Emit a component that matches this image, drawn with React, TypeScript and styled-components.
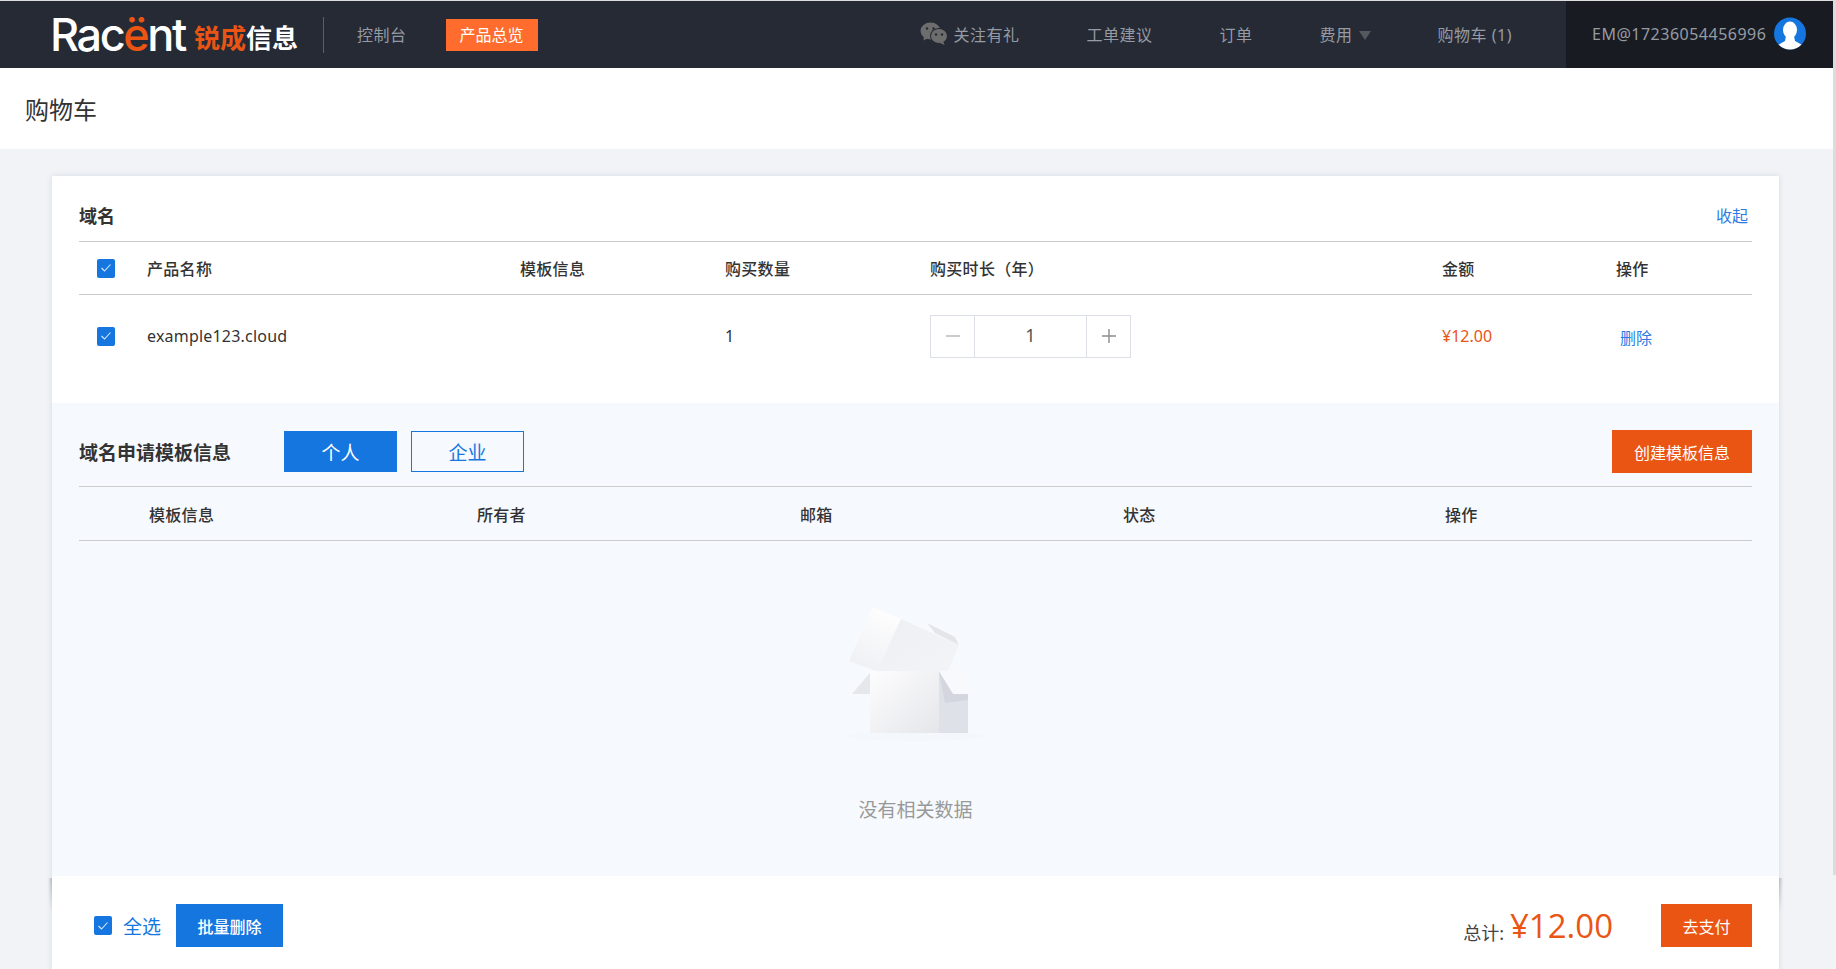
import React from "react";
import styled, { createGlobalStyle } from "styled-components";

const GlobalStyle = createGlobalStyle`
  html {
    overflow: hidden;
  }
  body {
    margin: 0;
    background: #f1f3f7;
    color: #333;
    font-family: "Noto Sans", "Noto Sans CJK SC", sans-serif;
    font-size: 16px;
  }
`;

const Frame = styled.div`
  display: flex;
  height: 100vh;
  overflow: hidden;
`;

const Page = styled.div`
  flex: 1;
  min-width: 0;
`;

const ScrollTrack = styled.div`
  width: 3px;
  background: #f1f3f7;
`;

const ScrollThumb = styled.div`
  height: 875px;
  background: #dcdcdc;
`;

const Header = styled.header`
  height: 67px;
  display: flex;
  align-items: stretch;
  background: #252a35;
  border-top: 1px solid #dedede;
`;

const Logo = styled.div`
  display: flex;
  align-items: flex-end;
  width: 248px;
  height: 50px;
  margin-left: 50px;
  white-space: nowrap;
  line-height: 1;
`;

const LogoWord = styled.span`
  font-family: "Inter", sans-serif;
  font-weight: 500;
  font-size: 45px;
  letter-spacing: -2.4px;
  color: #fff;
  line-height: 45px;
  margin-bottom: -6px;
`;

const LogoAccent = styled.span`
  color: #ea5514;
`;

const LogoCn = styled.span<{ $accent?: boolean }>`
  font-family: "Noto Sans CJK SC", sans-serif;
  font-weight: 700;
  font-size: 26px;
  line-height: 26px;
  margin-bottom: 1px;
  color: ${(p) => (p.$accent ? "#ea5514" : "#fff")};
`;

const LogoGap = styled.span`
  flex: 1;
`;

const HeaderDivider = styled.div`
  width: 1px;
  height: 36px;
  margin: 16px 33px 0 25px;
  background: #5a5f69;
`;

const NavLink = styled.a`
  display: flex;
  align-items: center;
  gap: 6px;
  padding-bottom: 2px;
  color: #969ba3;
  white-space: nowrap;
  letter-spacing: 0.5px;
`;

const ActiveLink = styled.a`
  width: 92px;
  height: 32px;
  margin: 18px 0 0 39px;
  padding-bottom: 2px;
  box-sizing: border-box;
  display: flex;
  align-items: center;
  justify-content: center;
  background: #ff6c2d;
  color: #fff;
`;

const RightNav = styled.nav`
  margin-left: auto;
  display: flex;
  gap: 67px;
  margin-right: 54px;
`;

const Caret = styled.i`
  width: 0;
  height: 0;
  margin-top: 3px;
  border-left: 6px solid transparent;
  border-right: 6px solid transparent;
  border-top: 9px solid #55585e;
`;

const UserBox = styled.div`
  width: 267px;
  display: flex;
  align-items: center;
  gap: 8px;
  padding: 0 0 2px 26px;
  box-sizing: border-box;
  background: #181b22;
  color: #969ba3;
  letter-spacing: 0.5px;
`;

const TitleBar = styled.div`
  height: 81px;
  display: flex;
  align-items: center;
  padding-left: 25px;
  background: #fff;
  font-size: 24px;
  color: #333;
`;

const Main = styled.main`
  padding: 27px 54px 0 52px;
`;

const Card = styled.div`
  box-shadow: 0 0 6px rgba(60, 70, 100, 0.14);
`;

const Section = styled.section<{ $tint?: boolean }>`
  padding: 0 27px;
  background: ${(p) => (p.$tint ? "#f6f9fd" : "#fff")};
`;

const DomainSection = styled(Section)`
  height: 227px;
`;

const TemplateSection = styled(Section)`
  height: 473px;
`;

const SectionHead = styled.div`
  height: 66px;
  padding-top: 12px;
  display: flex;
  align-items: center;
  justify-content: space-between;
  border-bottom: 1px solid #ccc;
  box-sizing: border-box;
`;

const SectionTitle = styled.h2<{ $size: number }>`
  margin: 0;
  font-size: ${(p) => p.$size}px;
  font-weight: 700;
  color: #333;
`;

const Collapse = styled.a`
  margin-right: 4px;
  color: #2f7be0;
`;

const cartColumns = "68px 373px 205px 205px 512px 174px 136px";
const templateColumns = "70px 328px 323px 323px 322px 307px";

const TableRow = styled.div<{ $columns: string; $height: number; $head?: boolean }>`
  display: grid;
  grid-template-columns: ${(p) => p.$columns};
  align-items: center;
  height: ${(p) => p.$height}px;
  box-sizing: border-box;
  border-bottom: ${(p) => (p.$head ? "1px solid #ccc" : "none")};
  font-weight: ${(p) => (p.$head ? 500 : 400)};
  letter-spacing: ${(p) => (p.$head ? "0.3px" : "0")};
  color: #333;
`;

const DomainName = styled.div`
  letter-spacing: 0.2px;
`;

const CheckCell = styled.div`
  padding-left: 18px;
  display: flex;
`;

const Check = styled.span`
  width: 18px;
  height: 19px;
  border-radius: 2px;
  background: #1576e0;
  display: flex;
  align-items: center;
  justify-content: center;
`;

const Stepper = styled.div`
  width: 201px;
  height: 43px;
  display: flex;
  box-sizing: border-box;
  border: 1px solid #dcdfe8;
`;

const StepButton = styled.button`
  width: 43px;
  padding: 0;
  border: 0;
  background: #fff;
  display: flex;
  align-items: center;
  justify-content: center;
`;

const StepValue = styled.div`
  flex: 1;
  display: flex;
  align-items: center;
  justify-content: center;
  padding-bottom: 3px;
  border-left: 1px solid #dcdfe8;
  border-right: 1px solid #dcdfe8;
  font-size: 18px;
  color: #555;
`;

const Amount = styled.span`
  color: #ea5514;
`;

const DeleteLink = styled.a`
  padding: 2px 0 0 4px;
  color: #2f7be0;
`;

const Toolbar = styled.div`
  height: 84px;
  padding-top: 14px;
  display: flex;
  align-items: center;
  border-bottom: 1px solid #ccc;
  box-sizing: border-box;
`;

const TypeTabs = styled.div`
  margin-left: 53px;
  display: flex;
  gap: 14px;
`;

const TypeTab = styled.button<{ $active?: boolean }>`
  width: 113px;
  height: 41px;
  padding: 0;
  border: 1px solid #1576e0;
  background: ${(p) => (p.$active ? "#1576e0" : "transparent")};
  color: ${(p) => (p.$active ? "#fff" : "#1576e0")};
  font: inherit;
  font-size: 19px;
`;

const ActionButton = styled.button<{ $tone: "blue" | "orange"; $width: number }>`
  width: ${(p) => p.$width}px;
  height: 43px;
  padding: 0;
  border: 0;
  background: ${(p) => (p.$tone === "blue" ? "#1576e0" : "#ea5514")};
  color: #fff;
  font: inherit;
  font-weight: ${(p) => (p.$tone === "blue" ? 500 : 400)};
`;

const CreateButton = styled(ActionButton)`
  margin-left: auto;
`;

const Empty = styled.div`
  display: flex;
  flex-direction: column;
  align-items: center;
  padding-top: 49px;
`;

const EmptyArt = styled.div`
  margin-right: 11px;
  height: 160px;
`;

const EmptyText = styled.div`
  margin-top: 47px;
  font-size: 19px;
  line-height: 26px;
  color: #999;
`;

const Footer = styled.footer`
  position: relative;
  height: 99px;
  padding: 0 27px 0 42px;
  display: flex;
  align-items: center;
  background: #fff;
  &::before,
  &::after {
    content: "";
    position: absolute;
    top: 2px;
    width: 4px;
    height: 34px;
    mask-image: linear-gradient(#000, transparent);
  }
  &::before {
    left: -4px;
    background: linear-gradient(to left, rgba(90, 95, 110, 0.35), transparent);
  }
  &::after {
    right: -4px;
    background: linear-gradient(to right, rgba(90, 95, 110, 0.35), transparent);
  }
`;

const SelectAll = styled.label`
  display: flex;
  align-items: center;
  gap: 11px;
  margin-right: 15px;
  color: #1576e0;
  font-size: 19px;
`;

const Total = styled.div`
  margin-left: auto;
  margin-right: 48px;
  display: flex;
  align-items: flex-end;
  gap: 6px;
  font-size: 18px;
  line-height: 26px;
  color: #444;
`;

const TotalPrice = styled.span`
  font-family: "Open Sans", "Noto Sans", sans-serif;
  font-size: 33px;
  line-height: 40px;
  color: #ea5514;
`;

const CheckMark = () => (
  <Check>
    <svg width="12" height="10" viewBox="0 0 12 10" fill="none">
      <path d="M1.5 5 L4.5 8 L10.5 1.5" stroke="#d8e8fb" strokeWidth="1.1" />
    </svg>
  </Check>
);

const WechatIcon = () => (
  <svg width="28" height="23" viewBox="0 0 28 23">
    <ellipse cx="10.5" cy="9" rx="10" ry="8.5" fill="#6d6d6d" />
    <path d="M4 14 L3.5 18.5 L9 15.5 Z" fill="#6d6d6d" />
    <ellipse cx="19" cy="14" rx="9" ry="8" fill="#252a35" />
    <ellipse cx="19" cy="14" rx="8" ry="7" fill="#6d6d6d" />
    <path d="M23 19 L24.5 23 L19 20.5 Z" fill="#6d6d6d" />
    <circle cx="7" cy="6.5" r="1.2" fill="#252a35" />
    <circle cx="13.5" cy="6.5" r="1.2" fill="#252a35" />
    <circle cx="16" cy="12.5" r="1.2" fill="#252a35" />
    <circle cx="22" cy="12.5" r="1.2" fill="#252a35" />
  </svg>
);

const Avatar = () => (
  <svg width="32" height="33" viewBox="0 0 32 33">
    <defs>
      <clipPath id="avatar-clip">
        <circle cx="16" cy="16.5" r="16" />
      </clipPath>
    </defs>
    <circle cx="16" cy="16.5" r="16" fill="#1576e0" />
    <g clipPath="url(#avatar-clip)" fill="#fff">
      <ellipse cx="16" cy="13" rx="7" ry="8.5" />
      <path d="M12 19 L20 19 L21 24 L30 29 L30 34 L2 34 L2 29 L11 24 Z" />
    </g>
  </svg>
);

const EmptyBox = () => (
  <svg width="180" height="160" viewBox="0 0 180 160">
    <defs>
      <linearGradient id="box-front" x1="0" y1="0" x2="1" y2="1">
        <stop offset="0" stopColor="#fdfdfe" />
        <stop offset="1" stopColor="#e5e6ea" />
      </linearGradient>
      <linearGradient id="box-flap" x1="0.7" y1="0" x2="0.3" y2="1">
        <stop offset="0" stopColor="#fefefe" />
        <stop offset="1" stopColor="#eff0f4" />
      </linearGradient>
      <linearGradient id="box-top" x1="0" y1="0" x2="1" y2="1">
        <stop offset="0" stopColor="#eeeff3" />
        <stop offset="1" stopColor="#f3f4f7" />
      </linearGradient>
    </defs>
    <ellipse cx="95" cy="146" rx="68" ry="5" fill="#f4f7fb" />
    <polygon points="53,17 81,29 57,81 29,71" fill="url(#box-flap)" />
    <polygon points="81,29 139,55 128,81 57,81" fill="url(#box-top)" />
    <polygon points="107,33 135,47 139,55 115,43" fill="#e4e5e9" />
    <polygon points="50,83 32,104 50,104" fill="#e6e7ea" />
    <rect x="50" y="81" width="69" height="62" fill="url(#box-front)" />
    <rect x="119" y="81" width="29" height="62" fill="#dfe1e8" />
    <polygon points="119,81 148,81 148,104 133,104" fill="#f8f9fc" />
    <polygon points="119,82 133,104 148,104 148,110 125,113" fill="#d3d6df" />
  </svg>
);

const App: React.FunctionComponent<{}> = () => {
  return (
    <Frame>
      <GlobalStyle />
      <Page>
        <Header>
          <Logo>
            <LogoWord>
              Rac<LogoAccent>ë</LogoAccent>nt
            </LogoWord>
            <LogoGap />
            <LogoCn $accent>锐成</LogoCn>
            <LogoCn>信息</LogoCn>
          </Logo>
          <HeaderDivider />
          <NavLink>控制台</NavLink>
          <ActiveLink>产品总览</ActiveLink>
          <RightNav>
            <NavLink>
              <WechatIcon />
              关注有礼
            </NavLink>
            <NavLink>工单建议</NavLink>
            <NavLink>订单</NavLink>
            <NavLink>
              费用
              <Caret />
            </NavLink>
            <NavLink>购物车 (1)</NavLink>
          </RightNav>
          <UserBox>
            EM@17236054456996
            <Avatar />
          </UserBox>
        </Header>
        <TitleBar>购物车</TitleBar>
        <Main>
          <Card>
            <DomainSection>
              <SectionHead>
                <SectionTitle $size={18}>域名</SectionTitle>
                <Collapse>收起</Collapse>
              </SectionHead>
              <TableRow $columns={cartColumns} $height={53} $head>
                <CheckCell>
                  <CheckMark />
                </CheckCell>
                <div>产品名称</div>
                <div>模板信息</div>
                <div>购买数量</div>
                <div>购买时长（年）</div>
                <div>金额</div>
                <div>操作</div>
              </TableRow>
              <TableRow $columns={cartColumns} $height={82}>
                <CheckCell>
                  <CheckMark />
                </CheckCell>
                <DomainName>example123.cloud</DomainName>
                <div />
                <div>1</div>
                <Stepper>
                  <StepButton aria-label="减少">
                    <svg width="14" height="14" viewBox="0 0 14 14">
                      <path d="M0 7 H14" stroke="#b5b5b5" strokeWidth="1.4" />
                    </svg>
                  </StepButton>
                  <StepValue>1</StepValue>
                  <StepButton aria-label="增加">
                    <svg width="14" height="14" viewBox="0 0 14 14">
                      <path d="M0 7 H14 M7 0 V14" stroke="#8c8c8c" strokeWidth="1.4" />
                    </svg>
                  </StepButton>
                </Stepper>
                <Amount>¥12.00</Amount>
                <DeleteLink>删除</DeleteLink>
              </TableRow>
            </DomainSection>
            <TemplateSection $tint>
              <Toolbar>
                <SectionTitle $size={19}>域名申请模板信息</SectionTitle>
                <TypeTabs>
                  <TypeTab $active>个人</TypeTab>
                  <TypeTab>企业</TypeTab>
                </TypeTabs>
                <CreateButton $tone="orange" $width={140}>
                  创建模板信息
                </CreateButton>
              </Toolbar>
              <TableRow $columns={templateColumns} $height={54} $head>
                <div />
                <div>模板信息</div>
                <div>所有者</div>
                <div>邮箱</div>
                <div>状态</div>
                <div>操作</div>
              </TableRow>
              <Empty>
                <EmptyArt>
                  <EmptyBox />
                </EmptyArt>
                <EmptyText>没有相关数据</EmptyText>
              </Empty>
            </TemplateSection>
            <Footer>
              <SelectAll>
                <CheckMark />
                全选
              </SelectAll>
              <ActionButton $tone="blue" $width={107}>
                批量删除
              </ActionButton>
              <Total>
                总计:
                <TotalPrice>¥12.00</TotalPrice>
              </Total>
              <ActionButton $tone="orange" $width={91}>
                去支付
              </ActionButton>
            </Footer>
          </Card>
        </Main>
      </Page>
      <ScrollTrack>
        <ScrollThumb />
      </ScrollTrack>
    </Frame>
  );
};

export default App;
